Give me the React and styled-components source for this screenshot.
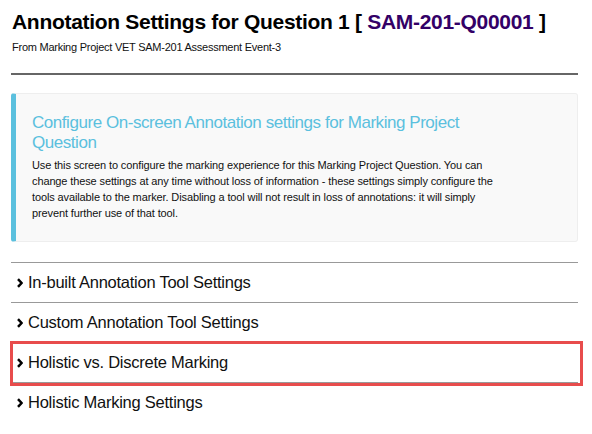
import React from 'react';
import styled, { createGlobalStyle } from 'styled-components';

const GlobalStyle = createGlobalStyle`
  body {
    margin: 0;
    background: #ffffff;
    font-family: 'Liberation Sans', Arial, sans-serif;
    color: #111;
  }
`;

const Page = styled.main`
  padding: 10px 14px 0 11px;
`;

const Header = styled.header`
  padding: 0 0 19px 1px;
  border-bottom: 2px solid #666;
`;

const Title = styled.h1`
  margin: 0;
  font-size: 21px;
  font-weight: bold;
  line-height: 24px;
  letter-spacing: -0.3px;
  color: #000;
`;

const Code = styled.span`
  color: #330066;
`;

const Subtitle = styled.div`
  margin-top: 6px;
  font-size: 11px;
  line-height: 14px;
  letter-spacing: -0.25px;
  color: #111;
`;

const Callout = styled.section`
  margin-top: 18px;
  background: #f9f9f9;
  border: 1px solid #eeeeee;
  border-left: 5px solid #5bc0de;
  border-radius: 3px;
  padding: 19px 75px 20px 16px;
`;

const CalloutTitle = styled.h4`
  margin: 0 0 4px;
  font-size: 17px;
  font-weight: normal;
  line-height: 20px;
  letter-spacing: -0.45px;
  color: #5bc0de;
`;

const CalloutText = styled.p`
  margin: 0;
  font-size: 11px;
  line-height: 16px;
  letter-spacing: -0.12px;
  color: #111;
`;

const Sections = styled.div`
  margin-top: 20px;
  border-top: 1px solid #999;
`;

const Row = styled.div`
  position: relative;
  display: flex;
  align-items: center;
  gap: 5px;
  height: 39px;
  padding-left: 6px;
  font-size: 16.5px;
  letter-spacing: -0.25px;
  color: #111;
  border-bottom: ${(p) => (p.$last ? 'none' : '1px solid #999')};

  &::after {
    content: '';
    display: ${(p) => (p.$highlight ? 'block' : 'none')};
    position: absolute;
    top: -2px;
    bottom: -4px;
    left: -1px;
    right: -5px;
    border: 3px solid #e84c4c;
    pointer-events: none;
  }
`;

const Chevron = styled.svg`
  width: 6px;
  height: 10px;
  flex: none;
`;

function Arrow() {
  return (
    <Chevron viewBox="0 0 6 10">
      <path d="M1 1.2 L4.6 5 L1 8.8" fill="none" stroke="#000" strokeWidth="2.5" />
    </Chevron>
  );
}

const sections = [
  { label: 'In-built Annotation Tool Settings' },
  { label: 'Custom Annotation Tool Settings' },
  { label: 'Holistic vs. Discrete Marking', highlight: true },
  { label: 'Holistic Marking Settings', last: true },
];

export default function App() {
  return (
    <>
      <GlobalStyle />
      <Page>
        <Header>
          <Title>
            Annotation Settings for Question 1 [ <Code>SAM-201-Q00001</Code> ]
          </Title>
          <Subtitle>From Marking Project VET SAM-201 Assessment Event-3</Subtitle>
        </Header>
        <Callout>
          <CalloutTitle>Configure On-screen Annotation settings for Marking Project Question</CalloutTitle>
          <CalloutText>
            Use this screen to configure the marking experience for this Marking Project Question. You can
            change these settings at any time without loss of information - these settings simply configure the
            tools available to the marker. Disabling a tool will not result in loss of annotations: it will simply
            prevent further use of that tool.
          </CalloutText>
        </Callout>
        <Sections>
          {sections.map((s) => (
            <Row key={s.label} $highlight={s.highlight} $last={s.last}>
              <Arrow />
              {s.label}
            </Row>
          ))}
        </Sections>
      </Page>
    </>
  );
}
